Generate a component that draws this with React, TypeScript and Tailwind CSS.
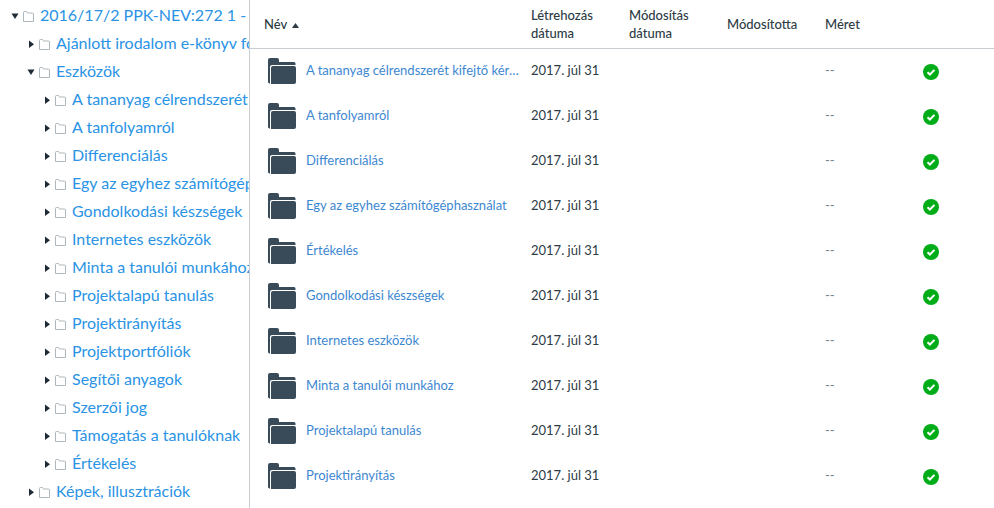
const tree: { label: string; depth: number; open?: boolean }[] = [
  { label: '2016/17/2 PPK-NEV:272 1 - Tanulási környezet', depth: 0, open: true },
  { label: 'Ajánlott irodalom e-könyv formátumban', depth: 1 },
  { label: 'Eszközök', depth: 1, open: true },
  { label: 'A tananyag célrendszerét kifejtő kérdések', depth: 2 },
  { label: 'A tanfolyamról', depth: 2 },
  { label: 'Differenciálás', depth: 2 },
  { label: 'Egy az egyhez számítógéphasználat', depth: 2 },
  { label: 'Gondolkodási készségek', depth: 2 },
  { label: 'Internetes eszközök', depth: 2 },
  { label: 'Minta a tanulói munkához', depth: 2 },
  { label: 'Projektalapú tanulás', depth: 2 },
  { label: 'Projektirányítás', depth: 2 },
  { label: 'Projektportfóliók', depth: 2 },
  { label: 'Segítői anyagok', depth: 2 },
  { label: 'Szerzői jog', depth: 2 },
  { label: 'Támogatás a tanulóknak', depth: 2 },
  { label: 'Értékelés', depth: 2 },
  { label: 'Képek, illusztrációk', depth: 1 },
];

const rows = [
  'A tananyag célrendszerét kifejtő kérdések',
  'A tanfolyamról',
  'Differenciálás',
  'Egy az egyhez számítógéphasználat',
  'Értékelés',
  'Gondolkodási készségek',
  'Internetes eszközök',
  'Minta a tanulói munkához',
  'Projektalapú tanulás',
  'Projektirányítás',
];

const gridCols = 'grid grid-cols-[267px_98px_98px_98px_98px_1fr]';

function Arrow({ open }: { open?: boolean }) {
  return (
    <svg width="8" height="8" viewBox="0 0 8 8" className="mt-px shrink-0">
      {open ? <path d="M0.500 1.500h7L4 7z" fill="#1f2a33" /> : <path d="M2 0.500v7.500L7 4.250z" fill="#1f2a33" />}
    </svg>
  );
}

function SmallFolder() {
  return (
    <svg width="11" height="11" viewBox="0 0 11 11" className="mt-[3px] shrink-0">
      <path d="M0.500 10.500V1.500a1 1 0 0 1 1-1h2l1 1.500h5a1 1 0 0 1 1 1v7.500z" fill="#fff" stroke="#aeb7bc" strokeWidth="1" />
    </svg>
  );
}

function BigFolder() {
  return (
    <svg width="28" height="26" viewBox="0 0 28 26" className="mt-[-1px] shrink-0">
      <path d="M0 2a2 2 0 0 1 2-2h7a2 2 0 0 1 2 2v2h15a1.500 1.500 0 0 1 1.500 1.500V7H4a2 2 0 0 0-2 2v16.500C.8 25.500 0 24.800 0 24z" fill="#394b58" />
      <path d="M3 10a2 2 0 0 1 2-2h21a2 2 0 0 1 2 2v14a2 2 0 0 1-2 2H3z" fill="#394b58" />
    </svg>
  );
}

function Check() {
  return (
    <svg width="16" height="16" viewBox="0 0 16 16" className="shrink-0">
      <circle cx="8" cy="8" r="8" fill="#00ac18" />
      <path d="M4.500 8.200l2.400 2.300 4.600-4.600" fill="none" stroke="#fff" strokeWidth="2" />
    </svg>
  );
}

export default function App() {
  return (
    <div className="flex h-[508px] w-[994px] overflow-hidden bg-white font-['Lato','Open_Sans',sans-serif] text-[#2d3b45]">
      <aside className="h-full w-[250px] shrink-0 overflow-hidden border-r border-[#c7cdd1] pt-px">
        {tree.map((t, i) => (
          <div
            key={i}
            className={`flex h-[28px] items-center whitespace-nowrap ${
              t.depth === 0 ? 'pl-[11px]' : t.depth === 1 ? 'pl-[27px]' : 'pl-[43px]'
            }`}
          >
            <Arrow open={t.open} />
            <span className="ml-[4px] flex">
              <SmallFolder />
            </span>
            <span className="ml-[6px] text-[16px] leading-[28px] text-[#2a93e5]">{t.label}</span>
          </div>
        ))}
      </aside>
      <main className="min-w-0 flex-1">
        <div className={`${gridCols} h-[49px] items-center border-b border-[#c7cdd1] pl-[14px] text-[13px] leading-[18px]`}>
          <div className="flex items-center gap-[5px] font-medium">
            Név
            <svg width="7" height="5" viewBox="0 0 7 5" className="mt-[3px]">
              <path d="M0 5L3.500 0 7 5z" fill="#2d3b45" />
            </svg>
          </div>
          <div className="font-medium">Létrehozás dátuma</div>
          <div className="font-medium">Módosítás dátuma</div>
          <div className="font-medium">Módosította</div>
          <div className="font-medium">Méret</div>
          <div />
        </div>
        {rows.map((name) => (
          <div key={name} className={`${gridCols} h-[45px] items-center pl-[14px] text-[13px]`}>
            <div className="flex min-w-0 items-center pl-[4px]">
              <BigFolder />
              <a className="mb-[2px] ml-[10px] w-[215px] truncate text-[#3d87d1]">{name}</a>
            </div>
            <div className="mb-[2px]">2017. júl 31</div>
            <div />
            <div />
            <div className="mb-[2px] text-[#73818a]">--</div>
            <div>
              <Check />
            </div>
          </div>
        ))}
      </main>
    </div>
  );
}
